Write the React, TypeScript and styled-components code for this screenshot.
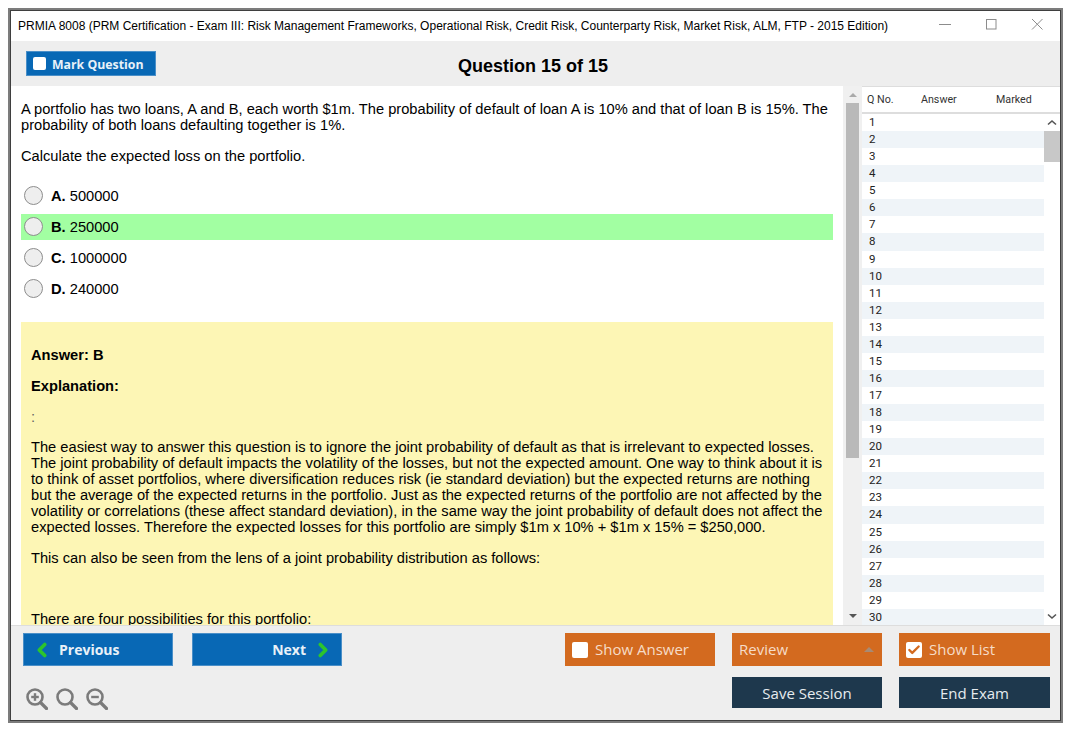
import React from "react";
import styled, { createGlobalStyle } from "styled-components";
import { ChevronLeft, ChevronRight, Check } from "lucide-react";

const Global = createGlobalStyle`
	html, body {
		margin: 0;
		padding: 0;
		background-color: white;
	}
	body {
		font-family: "Liberation Sans", Arial, sans-serif;
	}
`;

const questions = Array.from({ length: 30 }, (_, i) => i + 1);

const options = [
	{ key: "A", value: "500000", correct: false },
	{ key: "B", value: "250000", correct: true },
	{ key: "C", value: "1000000", correct: false },
	{ key: "D", value: "240000", correct: false },
];

const App = () => {
	return (
		<Page>
			<Global />
			<Window>
				<TitleBar>
					<TitleText>
						PRMIA 8008 (PRM Certification - Exam III: Risk Management Frameworks, Operational Risk, Credit
						Risk, Counterparty Risk, Market Risk, ALM, FTP - 2015 Edition)
					</TitleText>
					<WinControls>
						<svg width='12' height='12' viewBox='0 0 12 12'>
							<path d='M0 6.5H12' stroke='#8c8c8c' strokeWidth='1' />
						</svg>
						<svg width='12' height='12' viewBox='0 0 12 12'>
							<rect x='1.5' y='1.5' width='9.5' height='9.5' fill='none' stroke='#8c8c8c' strokeWidth='1' />
						</svg>
						<svg width='12' height='12' viewBox='0 0 12 12'>
							<path d='M1 1L11.5 11.5M11.5 1L1 11.5' stroke='#8c8c8c' strokeWidth='1' />
						</svg>
					</WinControls>
				</TitleBar>

				<Toolbar>
					<MarkButton>
						<CheckBox size={13} />
						<MarkLabel>Mark Question</MarkLabel>
					</MarkButton>
					<QuestionTitle>Question 15 of 15</QuestionTitle>
				</Toolbar>

				<Main>
					<Left>
						<Para>
							A portfolio has two loans, A and B, each worth $1m. The probability of default of loan A is 10% and
							that of loan B is 15%. The probability of both loans defaulting together is 1%.
						</Para>
						<Para>Calculate the expected loss on the portfolio.</Para>
						<OptionList>
							{options.map((o) => (
								<OptionRow key={o.key} correct={o.correct}>
									<Radio />
									<span>
										<b>{o.key}.</b> {o.value}
									</span>
								</OptionRow>
							))}
						</OptionList>
						<AnswerBox>
							<Para>
								<b>Answer: B</b>
							</Para>
							<Para>
								<b>Explanation:</b>
							</Para>
							<ColonLine>:</ColonLine>
							<Para>
								The easiest way to answer this question is to ignore the joint probability of default as that is
								irrelevant to expected losses. The joint probability of default impacts the volatility of the losses,
								but not the expected amount. One way to think about it is to think of asset portfolios, where
								diversification reduces risk (ie standard deviation) but the expected returns are nothing but the
								average of the expected returns in the portfolio. Just as the expected returns of the portfolio are
								not affected by the volatility or correlations (these affect standard deviation), in the same way the
								joint probability of default does not affect the expected losses. Therefore the expected losses for
								this portfolio are simply $1m x 10% + $1m x 15% = $250,000.
							</Para>
							<Para>This can also be seen from the lens of a joint probability distribution as follows:</Para>
							<Gap />
							<Para>There are four possibilities for this portfolio:</Para>
						</AnswerBox>
					</Left>

					<ScrollBar>
						<Arrow up />
						<Thumb />
						<Arrow />
					</ScrollBar>

					<Side>
						<ListHead>
							<HeadCell wd='48px' pad='5px'>Q No.</HeadCell>
							<HeadCell wd='86px' pad='11px'>Answer</HeadCell>
							<HeadCell wd='50px' pad='0'>Marked</HeadCell>
						</ListHead>
						<ListBody>
							<Rows>
								{questions.map((q) => (
									<Row key={q} alt={q % 2 === 0}>
										{q}
									</Row>
								))}
							</Rows>
							<ListScroll>
								<svg width='16' height='17' viewBox='0 0 16 17'>
									<path d='M4 10.5L8 7L12 10.5' fill='none' stroke='#555' strokeWidth='1.6' />
								</svg>
								<ListThumb />
								<ListSpacer />
								<svg width='16' height='17' viewBox='0 0 16 17'>
									<path d='M4 6.5L8 10L12 6.5' fill='none' stroke='#555' strokeWidth='1.6' />
								</svg>
							</ListScroll>
						</ListBody>
					</Side>
				</Main>

				<Footer>
					<LeftTools>
						<NavRow>
							<NavButton>
								<ChevronLeft size={22} strokeWidth={4} color='#2cc52c' />
								<NavLabel>Previous</NavLabel>
							</NavButton>
							<NavButton right>
								<NavLabel>Next</NavLabel>
								<ChevronRight size={22} strokeWidth={4} color='#2cc52c' />
							</NavButton>
						</NavRow>
						<ZoomRow>
							<ZoomIcon kind='in' />
							<ZoomIcon kind='reset' />
							<ZoomIcon kind='out' />
						</ZoomRow>
					</LeftTools>
					<ActionGrid>
						<OrangeButton>
							<CheckBox size={16} />
							<OrangeLabel>Show Answer</OrangeLabel>
						</OrangeButton>
						<OrangeButton spread>
							<OrangeLabel>Review</OrangeLabel>
							<Caret />
						</OrangeButton>
						<OrangeButton>
							<CheckBox size={16}>
								<Check size={14} strokeWidth={4} color='#d36a1f' />
							</CheckBox>
							<OrangeLabel>Show List</OrangeLabel>
						</OrangeButton>
						<Blank />
						<DarkButton>Save Session</DarkButton>
						<DarkButton>End Exam</DarkButton>
					</ActionGrid>
				</Footer>
			</Window>
		</Page>
	);
};

export default App;

const ZoomIcon = ({ kind }: { kind: "in" | "reset" | "out" }) => (
	<svg width='22' height='22' viewBox='0 0 22 22'>
		<circle cx='9' cy='9' r='7.5' fill='none' stroke='#7b7b7b' strokeWidth='2.6' />
		<path d='M14.5 14.5L20.5 20.5' stroke='#7b7b7b' strokeWidth='3.2' strokeLinecap='round' />
		{kind !== "reset" && <path d='M5.2 9H12.8' stroke='#7b7b7b' strokeWidth='2.4' />}
		{kind === "in" && <path d='M9 5.2V12.8' stroke='#7b7b7b' strokeWidth='2.4' />}
	</svg>
);

const Page = styled.div`
	padding: 10px 0 0 10px;
	width: 1065px;
	height: 725px;
	overflow: hidden;
`;

const Window = styled.div`
	width: 1051px;
	height: 711px;
	box-sizing: border-box;
	border: 1px solid #3f3f3f;
	outline: 2px solid #7c7c7c;
	background-color: #eee;
	display: flex;
	flex-direction: column;
	overflow: hidden;
`;

const TitleBar = styled.div`
	height: 30px;
	flex-shrink: 0;
	background-color: white;
	display: flex;
	align-items: center;
	justify-content: space-between;
	padding-left: 7px;
`;

const TitleText = styled.div`
	font-size: 12px;
	color: #000;
	white-space: nowrap;
`;

const WinControls = styled.div`
	display: flex;
	gap: 34px;
	padding-right: 17px;
	align-items: center;
	margin-top: -5px;
`;

const Toolbar = styled.div`
	height: 45px;
	flex-shrink: 0;
	background-color: #eee;
	display: flex;
	align-items: center;
	padding-left: 15px;
	position: relative;
`;

const MarkButton = styled.div`
	width: 130px;
	height: 25px;
	box-sizing: border-box;
	background-color: #0868b5;
	border: 1px solid #4a8fc8;
	display: flex;
	align-items: center;
	gap: 6px;
	padding-left: 6px;
`;

const MarkLabel = styled.span`
	color: #e9f1f8;
	font-family: "Open Sans", sans-serif;
	font-size: 12.3px;
	font-weight: 700;
	margin-top: 2px;
`;

const CheckBox = styled.div<{ size: number }>`
	width: ${(props) => props.size}px;
	height: ${(props) => props.size}px;
	border-radius: 2px;
	background-color: white;
	display: flex;
	align-items: center;
	justify-content: center;
	flex-shrink: 0;
`;

const QuestionTitle = styled.div`
	position: absolute;
	left: 447px;
	top: 15px;
	font-size: 18px;
	font-weight: 700;
	color: black;
`;

const Main = styled.div`
	height: 539px;
	flex-shrink: 0;
	display: flex;
	background-color: white;
`;

const Left = styled.div`
	width: 832px;
	box-sizing: border-box;
	padding: 15px 10px 0 10px;
	overflow: hidden;
	font-size: 14.67px;
	line-height: 16px;
	color: #000;
`;

const Para = styled.p`
	margin: 0 0 15px 0;
`;

const ColonLine = styled(Para)`
	margin-bottom: 14px;
	color: #666;
`;

const OptionList = styled.div`
	display: flex;
	flex-direction: column;
	gap: 5px;
	margin-top: 19px;
	margin-bottom: 20px;
`;

const OptionRow = styled.div<{ correct: boolean }>`
	height: 26px;
	display: flex;
	align-items: center;
	gap: 8px;
	padding-left: 3px;
	background-color: ${(props) => (props.correct ? "#a2ffa2" : "transparent")};
`;

const Radio = styled.div`
	width: 19px;
	height: 19px;
	box-sizing: border-box;
	border-radius: 50%;
	background-color: #eee;
	border: 1px solid #8d8d8d;
	margin-bottom: 2px;
`;

const AnswerBox = styled.div`
	background-color: #fdf6b5;
	padding: 25px 10px 0 10px;
	height: 400px;
`;

const Gap = styled.div`
	height: 30px;
`;

const ScrollBar = styled.div`
	width: 19px;
	flex-shrink: 0;
	background-color: #f0f0f0;
	display: flex;
	flex-direction: column;
	align-items: center;
	justify-content: space-between;
	padding: 7px 0;
	box-sizing: border-box;
`;

const Arrow = styled.div<{ up?: boolean }>`
	width: 0;
	height: 0;
	border-left: 4px solid transparent;
	border-right: 4px solid transparent;
	${(props) => (props.up ? "border-bottom: 4px solid #aaa;" : "border-top: 4px solid #555;")}
`;

const Thumb = styled.div`
	width: 13px;
	height: 355px;
	background-color: #b9b9b9;
	margin-bottom: auto;
	margin-top: 6px;
`;

const Side = styled.div`
	flex: 1;
	display: flex;
	flex-direction: column;
	font-family: Roboto, sans-serif;
`;

const ListHead = styled.div`
	height: 28px;
	flex-shrink: 0;
	box-sizing: border-box;
	background-color: white;
	border-top: 1px solid #ddd;
	border-bottom: 2px solid #ddd;
	display: flex;
	align-items: center;
`;

const HeadCell = styled.div<{ wd: string; pad: string }>`
	min-width: ${(props) => props.wd};
	padding-left: ${(props) => props.pad};
	box-sizing: border-box;
	font-size: 10.7px;
	color: #333;
`;

const ListBody = styled.div`
	flex: 1;
	display: flex;
	overflow: hidden;
`;

const Rows = styled.div`
	width: 182px;
	flex-shrink: 0;
`;

const Row = styled.div<{ alt: boolean }>`
	height: 17.07px;
	line-height: 17px;
	padding-left: 7px;
	font-size: 11.5px;
	color: #222;
	background-color: ${(props) => (props.alt ? "#eff4f8" : "white")};
`;

const ListScroll = styled.div`
	flex: 1;
	display: flex;
	flex-direction: column;
	background-color: white;
`;

const ListThumb = styled.div`
	height: 31px;
	background-color: #c8c8c8;
	flex-shrink: 0;
`;

const ListSpacer = styled.div`
	flex: 1;
`;

const Footer = styled.div`
	flex: 1;
	display: flex;
	justify-content: space-between;
	padding: 7px 10px 0 12px;
	background-color: #eee;
	border-top: 1px solid #ddd;
`;

const LeftTools = styled.div`
	display: flex;
	flex-direction: column;
`;

const NavRow = styled.div`
	display: flex;
	gap: 19px;
`;

const NavButton = styled.div<{ right?: boolean }>`
	width: 150px;
	height: 33px;
	box-sizing: border-box;
	background-color: #0868b5;
	border: 1px solid #4a8fc8;
	display: flex;
	align-items: center;
	justify-content: ${(props) => (props.right ? "flex-end" : "flex-start")};
	gap: 6px;
	padding: 0 7px;
`;

const NavLabel = styled.span`
	color: #e9f1f8;
	font-family: "Open Sans", sans-serif;
	font-size: 14px;
	font-weight: 700;
`;

const ZoomRow = styled.div`
	display: flex;
	gap: 8px;
	margin-top: 22px;
	margin-left: 3px;
`;

const ActionGrid = styled.div`
	display: grid;
	grid-template-columns: 150px 150px 151px;
	grid-template-rows: 33px 31px;
	column-gap: 17px;
	row-gap: 11px;
	font-family: "Open Sans", sans-serif;
`;

const OrangeButton = styled.div<{ spread?: boolean }>`
	background-color: #d36a1f;
	font-size: 15px;
	display: flex;
	align-items: center;
	gap: 7px;
	padding: 0 8px 0 7px;
	justify-content: ${(props) => (props.spread ? "space-between" : "flex-start")};
`;

const OrangeLabel = styled.span`
	color: #f6dcc8;
	margin-top: -2px;
`;

const Caret = styled.div`
	width: 0;
	height: 0;
	border-left: 5px solid transparent;
	border-right: 5px solid transparent;
	border-bottom: 5px solid #a88a74;
`;

const Blank = styled.div``;

const DarkButton = styled.div`
	background-color: #1e384d;
	color: #e6ebef;
	font-size: 15px;
	display: flex;
	align-items: center;
	justify-content: center;
`;
